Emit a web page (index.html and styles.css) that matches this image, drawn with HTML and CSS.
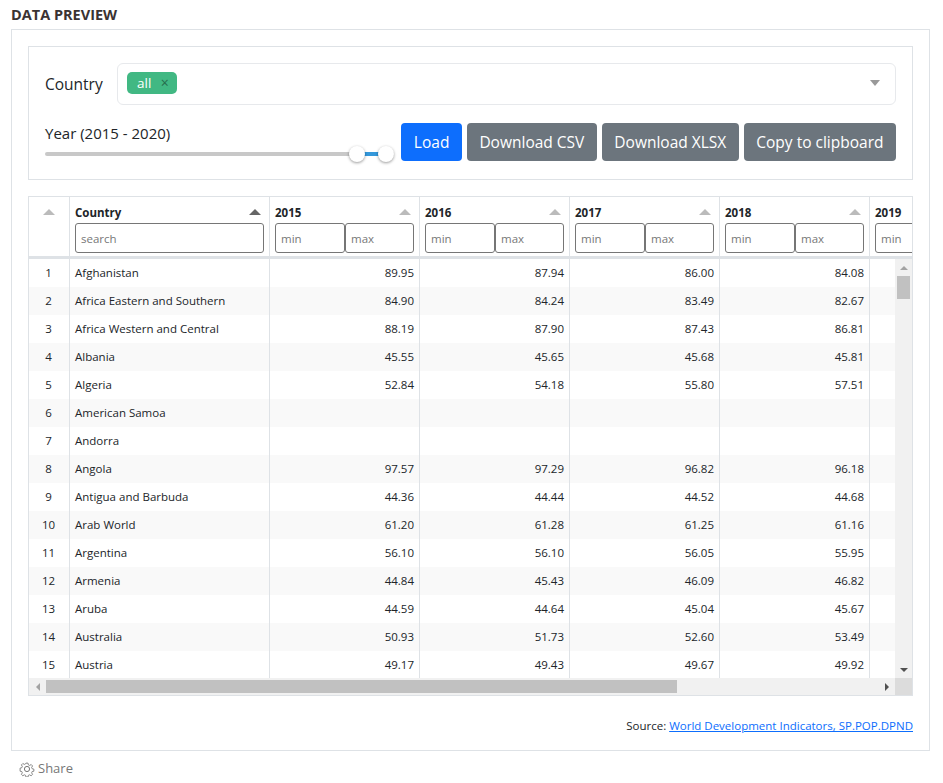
FILE: index.html
```html
<!DOCTYPE html>
<html lang="en">
<head>
  <meta charset="UTF-8">
  <meta name="viewport" content="width=device-width, initial-scale=1.0">
  <title>Data preview</title>
  <link rel="stylesheet" href="styles.css">
</head>
<body>
  <h4 class="title">DATA PREVIEW</h4>
  <div class="box">
    <div class="filters">
      <div class="country-row">
        <label class="country-label">Country</label>
        <div class="select">
          <span class="tag">all <span class="tag-x">×</span></span>
          <span class="select-caret"></span>
        </div>
      </div>
      <div class="year-row">
        <div class="year">
          <div class="year-label">Year (2015 - 2020)</div>
          <div class="slider">
            <div class="slider-fill"></div>
            <span class="handle handle-from"></span>
            <span class="handle handle-to"></span>
          </div>
        </div>
        <div class="buttons">
          <button class="btn btn-blue">Load</button>
          <button class="btn">Download CSV</button>
          <button class="btn">Download XLSX</button>
          <button class="btn">Copy to clipboard</button>
        </div>
      </div>
    </div>

    <div class="grid">
      <div class="grid-head">
        <div class="hcell col-idx"><span class="sort sort-idx"></span></div>
        <div class="hcell col-country">
          <div class="hcell-top"><b>Country</b><span class="sort sort-on"></span></div>
          <input class="search" placeholder="search">
        </div>
        <div class="hcell col-num">
          <div class="hcell-top"><b>2015</b><span class="sort"></span></div>
          <div class="range"><input placeholder="min"><input placeholder="max"></div>
        </div>
        <div class="hcell col-num">
          <div class="hcell-top"><b>2016</b><span class="sort"></span></div>
          <div class="range"><input placeholder="min"><input placeholder="max"></div>
        </div>
        <div class="hcell col-num">
          <div class="hcell-top"><b>2017</b><span class="sort"></span></div>
          <div class="range"><input placeholder="min"><input placeholder="max"></div>
        </div>
        <div class="hcell col-num">
          <div class="hcell-top"><b>2018</b><span class="sort"></span></div>
          <div class="range"><input placeholder="min"><input placeholder="max"></div>
        </div>
        <div class="hcell col-num">
          <div class="hcell-top"><b>2019</b><span class="sort"></span></div>
          <div class="range"><input placeholder="min"><input placeholder="max"></div>
        </div>
      </div>

      <div class="grid-mid">
        <div class="grid-body">
          <div class="row"><div class="cell col-idx">1</div><div class="cell col-country">Afghanistan</div><div class="cell col-num">89.95</div><div class="cell col-num">87.94</div><div class="cell col-num">86.00</div><div class="cell col-num">84.08</div></div>
          <div class="row"><div class="cell col-idx">2</div><div class="cell col-country">Africa Eastern and Southern</div><div class="cell col-num">84.90</div><div class="cell col-num">84.24</div><div class="cell col-num">83.49</div><div class="cell col-num">82.67</div></div>
          <div class="row"><div class="cell col-idx">3</div><div class="cell col-country">Africa Western and Central</div><div class="cell col-num">88.19</div><div class="cell col-num">87.90</div><div class="cell col-num">87.43</div><div class="cell col-num">86.81</div></div>
          <div class="row"><div class="cell col-idx">4</div><div class="cell col-country">Albania</div><div class="cell col-num">45.55</div><div class="cell col-num">45.65</div><div class="cell col-num">45.68</div><div class="cell col-num">45.81</div></div>
          <div class="row"><div class="cell col-idx">5</div><div class="cell col-country">Algeria</div><div class="cell col-num">52.84</div><div class="cell col-num">54.18</div><div class="cell col-num">55.80</div><div class="cell col-num">57.51</div></div>
          <div class="row"><div class="cell col-idx">6</div><div class="cell col-country">American Samoa</div><div class="cell col-num"></div><div class="cell col-num"></div><div class="cell col-num"></div><div class="cell col-num"></div></div>
          <div class="row"><div class="cell col-idx">7</div><div class="cell col-country">Andorra</div><div class="cell col-num"></div><div class="cell col-num"></div><div class="cell col-num"></div><div class="cell col-num"></div></div>
          <div class="row"><div class="cell col-idx">8</div><div class="cell col-country">Angola</div><div class="cell col-num">97.57</div><div class="cell col-num">97.29</div><div class="cell col-num">96.82</div><div class="cell col-num">96.18</div></div>
          <div class="row"><div class="cell col-idx">9</div><div class="cell col-country">Antigua and Barbuda</div><div class="cell col-num">44.36</div><div class="cell col-num">44.44</div><div class="cell col-num">44.52</div><div class="cell col-num">44.68</div></div>
          <div class="row"><div class="cell col-idx">10</div><div class="cell col-country">Arab World</div><div class="cell col-num">61.20</div><div class="cell col-num">61.28</div><div class="cell col-num">61.25</div><div class="cell col-num">61.16</div></div>
          <div class="row"><div class="cell col-idx">11</div><div class="cell col-country">Argentina</div><div class="cell col-num">56.10</div><div class="cell col-num">56.10</div><div class="cell col-num">56.05</div><div class="cell col-num">55.95</div></div>
          <div class="row"><div class="cell col-idx">12</div><div class="cell col-country">Armenia</div><div class="cell col-num">44.84</div><div class="cell col-num">45.43</div><div class="cell col-num">46.09</div><div class="cell col-num">46.82</div></div>
          <div class="row"><div class="cell col-idx">13</div><div class="cell col-country">Aruba</div><div class="cell col-num">44.59</div><div class="cell col-num">44.64</div><div class="cell col-num">45.04</div><div class="cell col-num">45.67</div></div>
          <div class="row"><div class="cell col-idx">14</div><div class="cell col-country">Australia</div><div class="cell col-num">50.93</div><div class="cell col-num">51.73</div><div class="cell col-num">52.60</div><div class="cell col-num">53.49</div></div>
          <div class="row"><div class="cell col-idx">15</div><div class="cell col-country">Austria</div><div class="cell col-num">49.17</div><div class="cell col-num">49.43</div><div class="cell col-num">49.67</div><div class="cell col-num">49.92</div></div>
        </div>
        <div class="vbar">
          <span class="arrow arrow-up"></span>
          <div class="vtrack"><div class="vthumb"></div></div>
          <span class="arrow arrow-down"></span>
        </div>
      </div>

      <div class="hbar">
        <span class="arrow arrow-left"></span>
        <div class="htrack"><div class="hthumb"></div></div>
        <span class="arrow arrow-right"></span>
        <span class="corner"></span>
      </div>
    </div>

    <div class="source">Source: <a href="#">World Development Indicators, SP.POP.DPND</a></div>
  </div>

  <div class="share">
    <svg class="share-icon" width="16" height="16" viewBox="0 0 16 16" fill="none" stroke="#777" stroke-width="1">
      <circle cx="8" cy="8" r="2.6"/>
      <path d="M6.8 1.2h2.4l.4 2 1.5.7 1.8-1.1 1.6 1.7-1.1 1.7.6 1.5 2 .5v2.4l-2 .4-.6 1.5 1.1 1.8-1.7 1.6-1.7-1.1-1.5.6-.4 2H6.800l-.4-2-1.500-.6-1.800 1.100-1.600-1.700 1.100-1.700-.6-1.500-2-.4V7l2-.5.6-1.500-1.100-1.700 1.700-1.700 1.700 1.100 1.500-.7z" transform="translate(1.100 1.100) scale(.86)"/>
    </svg>
    Share
  </div>
</body>
</html>
```

FILE: styles.css
```css
* {
  box-sizing: border-box;
}
body {
  margin: 0;
  padding: 0 13px 0 11px;
  font-family: "Open Sans", "Noto Sans", sans-serif;
  color: #212529;
  background: #fff;
}
.title {
  margin: 0;
  height: 29px;
  padding-top: 5px;
  font-size: 14.5px;
  line-height: 20px;
  font-weight: 700;
  color: #3a3333;
}
.box {
  height: 722px;
  border: 1px solid #dee2e6;
  padding: 16px;
}

/* filters */
.filters {
  height: 134px;
  border: 1px solid #dee2e6;
  padding: 16px 16px 0;
}
.country-row {
  display: flex;
  align-items: center;
  height: 42px;
}
.country-label {
  width: 72px;
  font-size: 15.500px;
}
.select {
  flex: 1;
  height: 42px;
  display: flex;
  align-items: center;
  justify-content: space-between;
  padding: 0 15px 0 9px;
  border: 1px solid #e7e9ec;
  border-radius: 6px;
}
.tag {
  width: 50px;
  height: 22px;
  margin-top: -2px;
  padding-left: 10px;
  border-radius: 5px;
  background: #41b883;
  color: #fff;
  font-size: 13.500px;
  line-height: 22px;
  white-space: nowrap;
}
.tag-x {
  margin-left: 6px;
  color: #266d4d;
  font-size: 14px;
}
.select-caret {
  width: 0;
  height: 0;
  margin-top: -3px;
  border: 5px solid transparent;
  border-top: 6px solid #999;
  border-bottom: 0;
}
.year-row {
  display: flex;
  justify-content: space-between;
  margin-top: 18px;
}
.year {
  width: 349px;
  padding-top: 0;
}
.year-label {
  font-size: 15px;
  line-height: 20px;
}
.slider {
  position: relative;
  height: 4px;
  margin-top: 9px;
  border-radius: 2px;
  background: #c8c8c8;
}
.slider-fill {
  position: absolute;
  left: 312px;
  top: 0;
  width: 29px;
  height: 4px;
  background: #3498db;
}
.handle {
  position: absolute;
  top: -6px;
  width: 16px;
  height: 16px;
  border-radius: 50%;
  background: #fff;
  box-shadow: 0 1px 3px rgba(0, 0, 0, .4);
}
.handle-from {
  left: 304px;
}
.handle-to {
  left: 333px;
}
.buttons {
  display: flex;
  gap: 5px;
}
.btn {
  height: 38px;
  padding: 0 12.500px;
  border: 0;
  border-radius: 4px;
  background: #6c757d;
  color: #fff;
  font-family: inherit;
  font-size: 15.500px;
  white-space: nowrap;
}
.btn-blue {
  background: #0d6efd;
}

/* data grid */
.grid {
  margin-top: 16px;
  height: 500px;
  border: 1px solid #dee2e6;
  font-size: 11.500px;
  display: flex;
  flex-direction: column;
  overflow: hidden;
}
.grid-head {
  display: flex;
  flex: none;
  height: 62px;
  border-bottom: 3px solid #dee2e6;
  overflow: hidden;
}
.col-idx {
  flex: none;
  width: 41px;
  border-right: 1px solid #dee2e6;
}
.col-country {
  flex: none;
  width: 200px;
  border-right: 1px solid #dee2e6;
}
.col-num {
  flex: none;
  width: 150px;
  border-right: 1px solid #dee2e6;
}
.hcell {
  padding: 6px 5px 0;
  position: relative;
}
.hcell-top {
  display: flex;
  justify-content: space-between;
  align-items: center;
  height: 18px;
  color: #212529;
}
.hcell-top b {
  font-weight: 700;
}
.sort {
  width: 0;
  height: 0;
  margin-right: 3px;
  border: 6px solid transparent;
  border-bottom: 6px solid #bbb;
  border-top: 0;
}
.sort-on {
  border-bottom-color: #666;
}
.sort-idx {
  display: block;
  margin: 6px auto 0;
}
.search,
.range input {
  display: block;
  height: 30px;
  border: 1px solid #767676;
  border-radius: 3px;
  padding: 0 5px;
  font-family: inherit;
  font-size: 11.500px;
  background: #fff;
  margin: 0;
}
.search {
  width: 100%;
  margin-top: 2px;
}
.range {
  display: flex;
  margin-top: 2px;
}
.range input {
  width: 70px;
}
.range input:last-child {
  width: 69px;
}
input::placeholder {
  color: #777;
  opacity: 1;
}
.grid-mid {
  display: flex;
  flex: 1;
  min-height: 0;
}
.grid-body {
  flex: 1;
  min-width: 0;
  overflow: hidden;
}
.row {
  display: flex;
  height: 28px;
}
.row:nth-child(2n) {
  background: #f9f9f9;
}
.cell {
  line-height: 28px;
  padding: 0 5px;
  white-space: nowrap;
}
.cell.col-idx {
  text-align: center;
  padding: 0 1px 0 0;
}
.cell.col-num {
  text-align: right;
}
.vbar {
  flex: none;
  width: 17px;
  background: #f1f1f1;
  display: flex;
  flex-direction: column;
}
.vtrack {
  flex: 1;
  padding: 0 2px;
}
.vthumb {
  height: 23px;
  background: #c1c1c1;
}
.hbar {
  flex: none;
  height: 17px;
  background: #f1f1f1;
  display: flex;
}
.htrack {
  flex: 1;
  padding: 2px 0;
}
.hthumb {
  width: 631px;
  height: 13px;
  background: #c1c1c1;
}
.corner {
  flex: none;
  width: 17px;
  background: #dcdcdc;
}
.arrow {
  flex: none;
  position: relative;
  display: block;
}
.arrow-up,
.arrow-down {
  height: 17px;
}
.arrow-left,
.arrow-right {
  width: 17px;
}
.arrow::after {
  content: "";
  position: absolute;
  left: 50%;
  top: 50%;
  border: 4px solid transparent;
  transform: translate(-50%, -50%);
}
.arrow-up::after {
  border-top: 0;
  border-bottom: 4px solid #a3a3a3;
}
.arrow-down::after {
  border-bottom: 0;
  border-top: 4px solid #505050;
}
.arrow-left::after {
  border-left: 0;
  border-right: 4px solid #a3a3a3;
}
.arrow-right::after {
  border-right: 0;
  border-left: 4px solid #505050;
}

/* footer */
.source {
  margin-top: 22px;
  text-align: right;
  font-size: 11.500px;
  line-height: 16px;
}
.source a {
  color: #0d6efd;
}
.share {
  display: flex;
  align-items: center;
  gap: 3px;
  margin: 8px 0 0 8px;
  font-size: 13px;
  color: #777;
}
.share-icon {
  display: block;
  margin-top: 2px;
}
```
